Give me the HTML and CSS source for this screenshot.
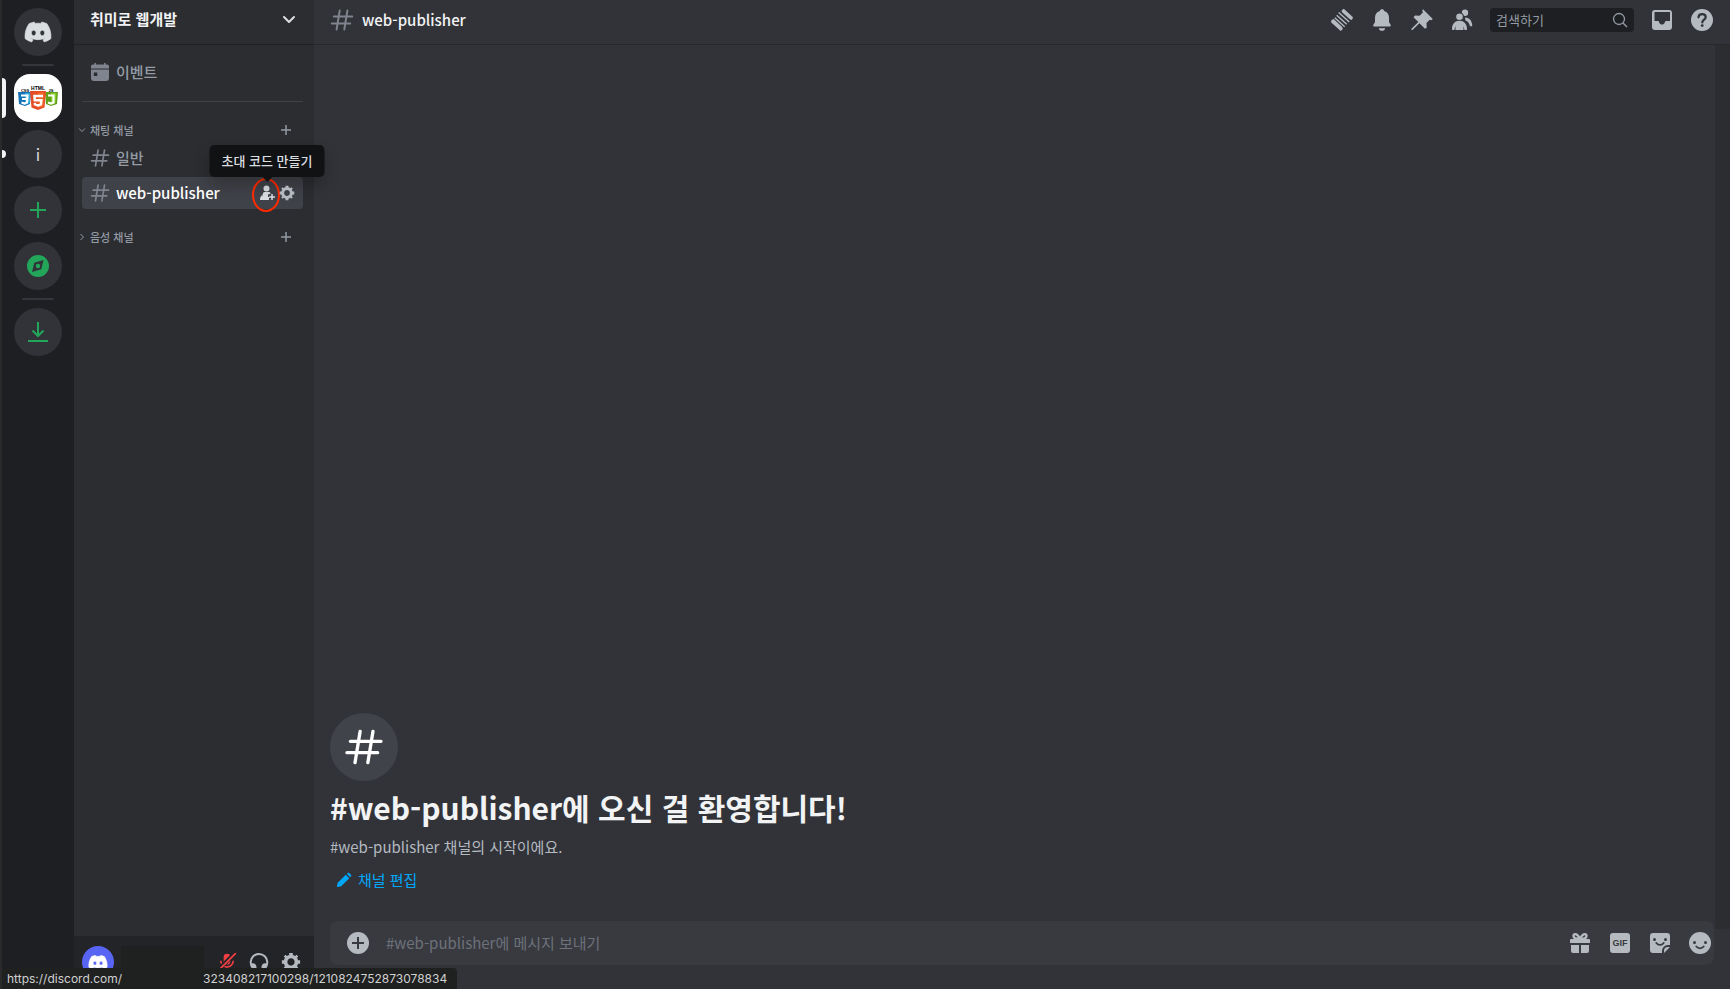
FILE: index.html
```html
<!DOCTYPE html>
<html lang="ko">
<head>
<meta charset="utf-8">
<meta name="viewport" content="width=device-width, initial-scale=1">
<title>web-publisher</title>
<link rel="stylesheet" href="styles.css">
</head>
<body>
<svg class="defs" aria-hidden="true">
  <symbol id="hash" viewBox="0 0 24 24"><path d="M9.7 2.6 6.6 21.4M17.4 2.6l-3.1 18.8M3.8 8.6h18.4M1.8 15.4h18.4" fill="none" stroke="currentColor" stroke-width="2" stroke-linecap="round"/></symbol>
  <symbol id="plus" viewBox="0 0 24 24"><path d="M12 2v20M2 12h20" fill="none" stroke="currentColor" stroke-width="3"/></symbol>
  <symbol id="gear" viewBox="1 1 22 22"><path fill="currentColor" fill-rule="evenodd" d="M19.738 10H22V14H19.739C19.498 14.931 19.1 15.798 18.565 16.564L20 18L18 20L16.565 18.564C15.797 19.099 14.932 19.498 14 19.738V22H10V19.738C9.069 19.498 8.203 19.099 7.436 18.564L6 20L4 18L5.436 16.564C4.901 15.799 4.502 14.932 4.262 14H2V10H4.262C4.502 9.068 4.9 8.202 5.436 7.436L4 6L6 4L7.436 5.436C8.202 4.9 9.068 4.502 10 4.262V2H14V4.261C14.932 4.502 15.797 4.9 16.565 5.435L18 3.999L20 5.999L18.564 7.436C19.099 8.202 19.498 9.069 19.738 10ZM12 16C14.209 16 16 14.209 16 12C16 9.791 14.209 8 12 8C9.791 8 8 9.791 8 12C8 14.209 9.791 16 12 16Z"/></symbol>
  <symbol id="logo" viewBox="0 0 28 20"><path fill="currentColor" stroke="currentColor" stroke-width=".6" stroke-linejoin="round" d="M23.021 1.677C21.311.88 19.508.319 17.658 0c-.252.462-.483.935-.687 1.418-1.968-.297-3.974-.297-5.943 0C10.819.935 10.589.462 10.337.005 8.481.324 6.678.885 4.967 1.682 1.567 6.779.65 11.754 1.111 16.652c1.99 1.49 4.215 2.622 6.581 3.348.531-.726 1.003-1.501 1.406-2.309-.768-.291-1.513-.649-2.221-1.078.188-.137.37-.274.547-.428 4.167 1.99 8.984 1.99 13.152 0 .177.148.359.291.541.428-.707.424-1.453.787-2.22 1.078.408.808.875 1.578 1.405 2.304 2.366-.726 4.591-1.859 6.581-3.348.541-5.674-.917-10.6-3.862-14.97ZM9.68 13.638c-1.282 0-2.339-1.193-2.339-2.644S8.372 8.35 9.68 8.35s2.359 1.193 2.339 2.644c0 1.451-1.036 2.644-2.339 2.644Zm8.636 0c-1.283 0-2.339-1.193-2.339-2.644s1.035-2.644 2.339-2.644c1.302 0 2.359 1.193 2.338 2.644 0 1.451-1.036 2.644-2.338 2.644Z"/></symbol>
</svg>

<div class="app">
  <nav class="rail" aria-label="서버">
    <a class="server" href="#" aria-label="다이렉트 메시지"><svg class="logo"><use href="#logo"/></svg></a>
    <span class="rail-line"></span>
    <a class="server server-active" href="#" aria-label="취미로 웹개발">
      <svg class="shields" viewBox="0 1 40 26">
        <path fill="#1572b6" d="M0 8h13l-1 12-5 2-6-2z"/><path fill="#33a9dc" d="M7 9h5v10l-5 2z"/>
        <path fill="none" stroke="#fff" stroke-width="2.200" d="M3 11.500h6.500l-.5 7-2.500 1-3-1M4 15h5"/>
        <path fill="#5fa018" d="M27 8h13l-1 12-6 2-5-2z"/><path fill="#83cd29" d="M33 9h5.500l-1 10-4.500 2z"/>
        <path fill="none" stroke="#fff" stroke-width="2.200" d="M30 11.500h5.500v7l-2.500 1-3-1"/>
        <path fill="#e44d26" d="M12 7h16l-1.500 16.500L20 26l-6.500-2.500z"/><path fill="#f16529" d="M20 8.300h6.500L25.300 22.500 20 24.500z"/>
        <path fill="none" stroke="#fff" stroke-width="2.500" d="M25 12h-8.500l.3 4.200h6.600l-.5 4.200-2.900 1-3-1-.1-1.500"/>
        <text class="shield-main" x="20" y="6" text-anchor="middle">HTML</text>
        <text class="shield-side" x="7" y="7.500" text-anchor="middle">CSS</text>
        <text class="shield-side" x="33" y="7.500" text-anchor="middle">JS</text>
      </svg>
    </a>
    <a class="server server-unread" href="#">i</a>
    <button class="server" aria-label="서버 추가하기"><svg class="i24"><path d="M12 4v16M4 12h16" fill="none" stroke="currentColor" stroke-width="2"/></svg></button>
    <button class="server" aria-label="서버 찾기"><svg class="i24"><path fill="currentColor" fill-rule="evenodd" d="M12 1a11 11 0 1 0 0 22 11 11 0 0 0 0-22Zm5.500 5L15.300 15.300 6 18l2.300-9.300Zm-5.500 3.800a2.200 2.200 0 1 0 0 4.400 2.200 2.200 0 0 0 0-4.400Z"/></svg></button>
    <span class="rail-line"></span>
    <button class="server" aria-label="앱 다운로드"><svg class="i24"><path d="M12 2v14M6.500 10.500 12 16l5.500-5.500M2 21h20" fill="none" stroke="currentColor" stroke-width="2"/></svg></button>
  </nav>

  <aside class="sidebar">
    <button class="guild">취미로 웹개발
      <svg class="i18" viewBox="0 0 18 18"><path d="m4 7 5 5 5-5" fill="none" stroke="#dbdee1" stroke-width="2" stroke-linecap="round" stroke-linejoin="round"/></svg>
    </button>
    <div class="channels">
      <a class="channel" href="#">
        <svg class="i20" viewBox="0 0 20 20"><path fill="currentColor" d="M3 2.500h1.500V1h1.500v1.500h8V1h1.500v1.500H17a2 2 0 0 1 2 2v2H1v-2a2 2 0 0 1 2-2Z"/><path fill="currentColor" fill-rule="evenodd" d="M1 7.500h18V16a3 3 0 0 1-3 3H4a3 3 0 0 1-3-3Zm2.800 3v3.500h3.500v-3.500Z"/></svg>
        <span>이벤트</span>
      </a>
      <div class="divider"></div>
      <div class="category">
        <button class="fold"><svg class="i8" viewBox="0 0 8 8"><path d="m1 2.500 3 3 3-3" fill="none" stroke="currentColor"/></svg>채팅 채널</button>
        <button class="icon" aria-label="채널 만들기"><svg class="i12"><use href="#plus"/></svg></button>
      </div>
      <a class="channel" href="#"><svg class="i20"><use href="#hash"/></svg><span>일반</span></a>
      <div class="channel channel-active">
        <svg class="i20"><use href="#hash"/></svg><a href="#">web-publisher</a>
        <div class="actions">
          <button class="icon invite" aria-label="초대 코드 만들기">
            <svg class="i16" viewBox="0 0 16 16"><circle cx="7.500" cy="3.500" r="3" fill="currentColor"/><path fill="currentColor" d="M5.500 7h4.500c1 0 1.500.8 1.600 1.700L9 9.500V12h1v3H1c0-2 .7-3.500 1.700-5L3 12l.8-3C4 7.800 4.600 7 5.500 7Z"/><path d="M13 9v6M10 12h6" stroke="currentColor" stroke-width="1.500"/></svg>
            <span class="ring"></span>
            <span class="tooltip" role="tooltip">초대 코드 만들기</span>
          </button>
          <button class="icon" aria-label="채널 편집"><svg class="i16"><use href="#gear"/></svg></button>
        </div>
      </div>
      <div class="category">
        <button class="fold"><svg class="i8" viewBox="0 0 8 8"><path d="m2.500 1 3 3-3 3" fill="none" stroke="currentColor"/></svg>음성 채널</button>
        <button class="icon" aria-label="채널 만들기"><svg class="i12"><use href="#plus"/></svg></button>
      </div>
    </div>
    <section class="user" aria-label="사용자">
      <span class="avatar"><svg class="avatar-logo"><use href="#logo"/></svg></span>
      <span class="username"></span>
      <button class="icon muted" aria-label="음소거"><svg class="i20" viewBox="0 0 24 24"><rect x="8" y="2" width="8" height="13" rx="4" fill="currentColor"/><path d="M4.500 10.500a7.500 7.500 0 0 0 15 0M12 18v4" fill="none" stroke="currentColor" stroke-width="2"/><path d="M22 1 2 21" stroke="#232428" stroke-width="5"/><path d="M22 2 2 22" stroke="currentColor" stroke-width="2.200" stroke-linecap="round"/></svg></button>
      <button class="icon" aria-label="헤드셋"><svg class="i20" viewBox="0 0 24 24"><path d="M4.500 19A10 10 0 1 1 19.500 19" fill="none" stroke="currentColor" stroke-width="2.400"/><path fill="currentColor" d="M3 14c3-1.500 6 1 6 4v4c-3 1-6-2-6-5Zm18 0c-3-1.500-6 1-6 4v4c3 1 6-2 6-5Z"/></svg></button>
      <button class="icon" aria-label="사용자 설정"><svg class="i20"><use href="#gear"/></svg></button>
    </section>
  </aside>

  <main class="main">
    <header class="topbar">
      <svg class="i24 dim" viewBox="0 0 24 24"><use href="#hash"/></svg>
      <h2>web-publisher</h2>
      <div class="tools">
        <button class="icon" aria-label="스레드"><svg class="i24"><path fill="currentColor" d="M11.500 2.500 13.800.8 23 9.300l-1 2.600-2.200-.7-7.800-7Zm-10 9.500L3.700 11l8.700 8.300.3 2-2 1.700L1 14.200Z"/><path d="m8.700 4.500 10.500 9.500M6.700 7.200l10 9M4.700 9.700l10 9" fill="none" stroke="currentColor" stroke-width="1.400"/></svg></button>
        <button class="icon" aria-label="알림 설정"><svg class="i24"><path fill="currentColor" d="M12 1.200c1.100 0 2 .6 2.200 1.700 3.200.9 4.800 3.500 4.800 6.600v4c0 1.700 1.800 2.500 1.800 4 0 .7-.5 1-1.300 1h-15c-.8 0-1.300-.3-1.300-1 0-1.500 1.800-2.300 1.800-4v-4c0-3.100 1.600-5.700 4.800-6.600.2-1.100 1.100-1.700 2.200-1.700ZM8.800 20.200h6.400c-.2 1.600-1.500 2.600-3.200 2.600s-3-1-3.200-2.600Z"/></svg></button>
        <button class="icon" aria-label="고정된 메시지"><svg class="i24"><path fill="currentColor" d="M13 1.200 22.800 11l-1.500 1.200-1.600-.4-3.200 3.200.2 4.700-1.700 1.100-5.600-5.500-6.600 6.500-1.600.5.500-1.700 6.600-6.500-4.800-4.800L5 7.500l4.600.2L13 4.300l-.8-1.500Z"/></svg></button>
        <button class="icon" aria-label="멤버 목록"><svg class="i24"><circle cx="15" cy="4.800" r="3.200" fill="currentColor"/><path fill="currentColor" d="M15 9.500c4.500-.2 7 3.500 7.300 8 0 1-1.600 1-2.300.5-1-3-2-4.500-4.500-5.500Z"/><circle cx="9.500" cy="8.800" r="3.900" fill="currentColor" stroke="#313338" stroke-width="1.200"/><path fill="currentColor" d="M9.500 12.800c4.500 0 7.500 3.200 7.500 8.200 0 .7-.3 1-1 1h-1.500l-1-4v4h-8v-4l-1.200 4H3c-.7 0-1-.3-1-1 0-5 3-8.200 7.500-8.200Z"/></svg></button>
        <label class="search"><input type="search" placeholder="검색하기" aria-label="검색하기"><svg class="i16" viewBox="0 0 16 16"><circle cx="7" cy="7" r="5.500" fill="none" stroke="currentColor" stroke-width="1.300"/><path d="m11 11 4 4" stroke="currentColor" stroke-width="1.500"/></svg></label>
        <button class="icon" aria-label="받은 편지함"><svg class="i24"><path fill="currentColor" fill-rule="evenodd" d="M5 2h14a3 3 0 0 1 3 3v14a3 3 0 0 1-3 3H5a3 3 0 0 1-3-3V5a3 3 0 0 1 3-3Zm-.500 2v9H8c1 0 1 1 1.300 1.700.5 1.100 1.400 1.800 2.700 1.800s2.200-.7 2.700-1.800c.3-.7.3-1.700 1.300-1.700h4V4Z"/></svg></button>
        <button class="icon" aria-label="도움말"><svg class="i24"><circle cx="12" cy="12" r="11" fill="currentColor"/><path d="M8.500 9.300c.1-2 1.600-3.200 3.600-3.200 2.100 0 3.600 1.300 3.600 3.100 0 2.400-3.400 2.600-3.400 5.200" fill="none" stroke="#313338" stroke-width="2.200" stroke-linecap="round"/><circle cx="12.200" cy="17.600" r="1.400" fill="#313338"/></svg></button>
      </div>
    </header>

    <div class="messages">
      <section class="welcome">
        <span class="badge"><svg class="i40"><use href="#hash"/></svg></span>
        <h1>#web-publisher에 오신 걸 환영합니다!</h1>
        <p>#web-publisher 채널의 시작이에요.</p>
        <button class="edit"><svg class="i16" viewBox="0 0 16 16"><path fill="currentColor" d="m10.800 1.700.9-.7c.5-.4 1-.4 1.500 0l1.800 1.800c.4.500.4 1 0 1.500l-.7.900ZM9.800 2.700l3.500 3.500-7.600 7.600c-.4.400-.8.600-1.300.700l-3 .6c-.4 0-.6-.2-.5-.5l.600-3c.1-.5.300-.9.700-1.300Z"/></svg>채널 편집</button>
      </section>
      <div class="track"></div>
    </div>

    <form class="composer">
      <button class="icon" type="button" aria-label="파일 첨부"><svg class="i24"><circle cx="12" cy="12" r="11" fill="currentColor"/><path d="M12 6v12M6 12h12" stroke="#383a40" stroke-width="2"/></svg></button>
      <input type="text" placeholder="#web-publisher에 메시지 보내기" aria-label="메시지">
      <button class="icon" type="button" aria-label="선물"><svg class="i24"><path d="M12 8C9 8 5.500 7.500 5.500 5S9 1.500 12 8Zm0 0c3 0 6.500-.5 6.500-3S15 1.500 12 8Z" fill="none" stroke="currentColor" stroke-width="2.400"/><path fill="currentColor" d="M3 8h18a1 1 0 0 1 1 1v3H2V9a1 1 0 0 1 1-1Zm0 6h8v8H5a2 2 0 0 1-2-2Zm10 0h8v6a2 2 0 0 1-2 2h-6Z"/></svg></button>
      <button class="icon gif" type="button"><span>GIF</span></button>
      <button class="icon" type="button" aria-label="스티커"><svg class="i24"><path fill="currentColor" d="M5 2h14a3 3 0 0 1 3 3v9h-2a6 6 0 0 0-6 6v2H5a3 3 0 0 1-3-3V5a3 3 0 0 1 3-3Zm17 14-6 6v-2a4 4 0 0 1 4-4Z"/><circle cx="6.500" cy="8.500" r="1.500" fill="#383a40"/><circle cx="17.500" cy="8.500" r="1.500" fill="#383a40"/><path d="M8.300 12c2 2.600 5.400 2.600 7.400 0" fill="none" stroke="#383a40" stroke-width="1.800" stroke-linecap="round"/></svg></button>
      <button class="icon" type="button" aria-label="이모지"><svg class="i24"><circle cx="12" cy="12" r="11" fill="currentColor"/><circle cx="6.500" cy="11.500" r="1.500" fill="#383a40"/><circle cx="17.500" cy="11.500" r="1.500" fill="#383a40"/><path d="M8.300 15.500c2 2.400 5.400 2.400 7.400 0" fill="none" stroke="#383a40" stroke-width="1.800" stroke-linecap="round"/></svg></button>
    </form>
  </main>
</div>
<div class="status"><span>https://discord.com/</span><span>323408217100298/1210824752873078834</span></div>
</body>
</html>
```
FILE: styles.css
```css
* { box-sizing: border-box; }

body {
  margin: 0;
  background: #313338;
  color: #949ba4;
  font: 15px/20px "Noto Sans CJK KR", sans-serif;
}

button, input {
  font: inherit;
  color: inherit;
  background: none;
  border: 0;
  padding: 0;
}
button { cursor: pointer; }
a { color: inherit; text-decoration: none; }
h1, h2, p { margin: 0; }
svg { display: block; flex: none; }

.defs { position: absolute; width: 0; height: 0; }
.i8 { width: 8px; height: 8px; }
.i12 { width: 12px; height: 12px; }
.i16 { width: 16px; height: 16px; }
.i18 { width: 18px; height: 18px; }
.i20 { width: 20px; height: 20px; }
.i24 { width: 24px; height: 24px; }
.i40 { width: 40px; height: 40px; }
.dim { color: #80848e; }

.app {
  display: flex;
  height: 100vh;
  border-left: 2px solid #2a2a2b;
}

/* Server rail */
.rail {
  flex: none;
  width: 72px;
  padding-top: 8px;
  display: flex;
  flex-direction: column;
  align-items: center;
  gap: 8px;
  background: #1e1f22;
}
.server {
  position: relative;
  display: flex;
  align-items: center;
  justify-content: center;
  width: 48px;
  height: 48px;
  border-radius: 50%;
  background: #313338;
  color: #23a55a;
}
.logo { width: 28px; height: 22px; color: #dbdee1; }
.rail-line { width: 32px; height: 2px; background: #35363c; border-radius: 1px; }
.server-active { border-radius: 16px; background: #fff; }
.server-unread { color: #dbdee1; font-size: 16px; }
.server-active::before, .server-unread::before {
  content: "";
  position: absolute;
  left: -12px;
  width: 4px;
  height: 40px;
  border-radius: 0 4px 4px 0;
  background: #f2f3f5;
}
.server-unread::before { height: 8px; }
.shields { width: 40px; height: 26px; }
.shield-main { font: 900 5px "Liberation Sans", sans-serif; fill: #000; }
.shield-side { font: 900 4px "Liberation Sans", sans-serif; fill: #000; }

/* Channel list */
.sidebar {
  flex: none;
  width: 240px;
  display: flex;
  flex-direction: column;
  background: #2b2d31;
}
.guild {
  display: flex;
  align-items: center;
  justify-content: space-between;
  height: 45px;
  padding: 0 16px 6px;
  border-bottom: 1px solid #202124;
  color: #f2f3f5;
  font-weight: 700;
}
.channels { flex: 1; padding: 11px 11px 0 8px; }
.channel {
  display: flex;
  align-items: center;
  height: 32px;
  padding: 0 8px;
  gap: 6px;
  border-radius: 4px;
  font-weight: 500;
}
.channel svg { color: #80848e; }
.channel-active { margin-top: 3px; background: #404249; color: #fff; }
.channel-active a { flex: 1; }
.actions { display: flex; gap: 4px; }
.actions .icon svg { color: #b5bac1; }
.actions .invite svg { color: #dbdee1; }
.divider { height: 1px; margin: 13px 0 16px; background: #3f4147; }
.category {
  display: flex;
  align-items: center;
  justify-content: space-between;
  height: 24px;
  padding-right: 11px;
}
.channel-active + .category { margin-top: 16px; }
.fold {
  display: flex;
  align-items: center;
  gap: 4px;
  margin-left: -4px;
  font-size: 11px;
  font-weight: 500;
}
.icon { position: relative; display: flex; align-items: center; justify-content: center; }

.ring {
  position: absolute;
  left: -7px;
  top: -7px;
  width: 28px;
  height: 34px;
  border: 2px solid #ff2a00;
  border-radius: 50%;
}
.tooltip {
  position: absolute;
  left: 50%;
  bottom: 24px;
  transform: translateX(-50%);
  padding: 6px 12px;
  border-radius: 5px;
  background: #111214;
  color: #dbdee1;
  font-size: 13px;
  white-space: nowrap;
  box-shadow: 0 8px 16px rgba(0, 0, 0, .24);
}
.tooltip::after {
  content: "";
  position: absolute;
  left: 50%;
  top: 100%;
  margin-left: -5px;
  border: 5px solid transparent;
  border-top-color: #111214;
}

.user {
  display: flex;
  align-items: flex-start;
  height: 53px;
  padding: 10px 7px 0 8px;
  background: #232428;
}
.avatar {
  display: flex;
  flex: none;
  align-items: center;
  justify-content: center;
  width: 32px;
  height: 32px;
  border-radius: 50%;
  background: #5865f2;
  color: #fff;
}
.avatar-logo { width: 20px; height: 15px; }
.username { flex: 1; height: 43px; margin: 0 7px; background: #1f2020; }
.user .icon { width: 32px; height: 32px; color: #b5bac1; }
.user .muted { color: #f23f43; }

/* Main column */
.main { flex: 1; min-width: 0; display: flex; flex-direction: column; }
.topbar {
  display: flex;
  align-items: center;
  height: 45px;
  padding: 0 16px 5px;
  border-bottom: 1px solid #27282c;
}
.topbar h2 { margin-left: 8px; color: #f2f3f5; font-size: 15px; font-weight: 500; }
.tools { display: flex; align-items: center; gap: 16px; margin-left: auto; color: #b5bac1; }
.search {
  display: flex;
  align-items: center;
  width: 144px;
  height: 24px;
  padding: 0 6px;
  border-radius: 4px;
  background: #1e1f22;
  color: #949ba4;
  font-size: 13px;
}
.search input { flex: 1; min-width: 0; outline: 0; appearance: none; }
input::placeholder { color: inherit; opacity: 1; }

.messages { flex: 1; display: flex; align-items: stretch; }
.welcome {
  flex: 1;
  display: flex;
  flex-direction: column;
  justify-content: flex-end;
  align-items: flex-start;
  padding: 0 16px 39px;
}
.badge {
  display: flex;
  align-items: center;
  justify-content: center;
  width: 68px;
  height: 68px;
  border-radius: 50%;
  background: #41434a;
  color: #fff;
}
.welcome h1 { margin: 6px 0 10px; color: #f2f3f5; font-size: 30px; line-height: 40px; font-weight: 700; }
.welcome p { color: #b5bac1; }
.edit { display: flex; align-items: center; gap: 6px; margin-top: 13px; padding: 0 6px; color: #00a8fc; }
.track { width: 15px; background: #2b2d31; }

.composer {
  position: relative;
  display: flex;
  align-items: center;
  gap: 16px;
  height: 44px;
  margin: -8px 16px 24px;
  padding: 0 2px 0 16px;
  border-radius: 8px;
  background: #383a40;
  color: #b5bac1;
}
.composer input { flex: 1; min-width: 0; outline: 0; color: #6d717a; }
.gif { width: 24px; height: 24px; }
.gif span {
  width: 20px;
  height: 20px;
  border-radius: 3px;
  background: #b5bac1;
  color: #383a40;
  font: 700 9px/20px "Liberation Sans", sans-serif;
}

/* Link preview shown by the browser */
.status {
  position: fixed;
  left: 2px;
  bottom: 0;
  display: flex;
  gap: 81px;
  height: 21px;
  padding: 0 10px 0 5px;
  border-radius: 0 4px 0 0;
  background: #1f2020;
  color: #d0d1d1;
  font: 12px/21px Inter, sans-serif;
}
```
